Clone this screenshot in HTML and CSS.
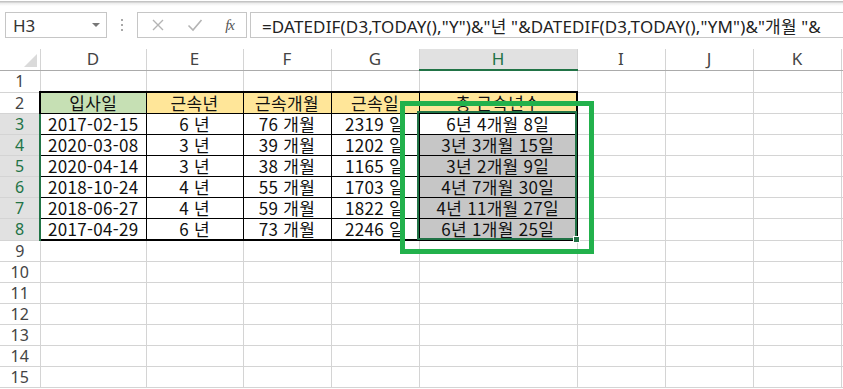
FILE: index.html
```html
<!DOCTYPE html>
<html lang="ko">
<head>
  <meta charset="UTF-8">
  <title>근속년수</title>
  <link rel="stylesheet" href="styles.css">
</head>
<body>
  <div class="topline"></div>

  <div class="fbar">
    <div class="namebox">
      <span>H3</span>
      <span class="arrow"></span>
    </div>
    <div class="dots"><i></i><i></i><i></i></div>
    <div class="btns">
      <svg class="ico" width="14" height="14" viewBox="0 0 14 14"><path d="M2 2 L12 12 M12 2 L2 12" stroke="#b4b4b4" stroke-width="1.4" fill="none"/></svg>
      <svg class="ico" width="16" height="14" viewBox="0 0 16 14"><path d="M1.5 7.5 L6 12 L14.5 2" stroke="#b4b4b4" stroke-width="1.6" fill="none"/></svg>
      <span class="fx">fx</span>
    </div>
    <div class="formula">=DATEDIF(D3,TODAY(),"Y")&amp;"년 "&amp;DATEDIF(D3,TODAY(),"YM")&amp;"개월 "&amp;</div>
  </div>

  <div class="sheet-wrap">
    <table class="sheet">
      <colgroup>
        <col class="w-hd"><col class="w-d"><col class="w-e"><col class="w-n"><col class="w-n">
        <col class="w-h"><col class="w-n"><col class="w-n"><col class="w-n"><col class="w-n">
      </colgroup>
      <tr class="colhead">
        <th class="corner"><span class="tri"></span></th>
        <th>D</th><th>E</th><th>F</th><th>G</th><th class="on">H</th><th>I</th><th>J</th><th>K</th><th></th>
      </tr>
      <tr><th>1</th><td></td><td></td><td></td><td></td><td></td><td></td><td></td><td></td><td></td></tr>
      <tr class="first">
        <th>2</th>
        <td class="d l hgreen">입사일</td><td class="d hyel">근속년</td><td class="d hyel">근속개월</td><td class="d hyel">근속일</td><td class="d r hyel">총 근속년수</td>
        <td></td><td></td><td></td><td></td>
      </tr>
      <tr>
        <th class="on">3</th>
        <td class="d l">2017-02-15</td><td class="d">6 년</td><td class="d">76 개월</td><td class="d">2319 일</td><td class="d r">6년 4개월 8일</td>
        <td></td><td></td><td></td><td></td>
      </tr>
      <tr>
        <th class="on">4</th>
        <td class="d l">2020-03-08</td><td class="d">3 년</td><td class="d">39 개월</td><td class="d">1202 일</td><td class="d r sel">3년 3개월 15일</td>
        <td></td><td></td><td></td><td></td>
      </tr>
      <tr>
        <th class="on">5</th>
        <td class="d l">2020-04-14</td><td class="d">3 년</td><td class="d">38 개월</td><td class="d">1165 일</td><td class="d r sel">3년 2개월 9일</td>
        <td></td><td></td><td></td><td></td>
      </tr>
      <tr>
        <th class="on">6</th>
        <td class="d l">2018-10-24</td><td class="d">4 년</td><td class="d">55 개월</td><td class="d">1703 일</td><td class="d r sel">4년 7개월 30일</td>
        <td></td><td></td><td></td><td></td>
      </tr>
      <tr>
        <th class="on">7</th>
        <td class="d l">2018-06-27</td><td class="d">4 년</td><td class="d">59 개월</td><td class="d">1822 일</td><td class="d r sel">4년 11개월 27일</td>
        <td></td><td></td><td></td><td></td>
      </tr>
      <tr class="last">
        <th class="on">8</th>
        <td class="d l">2017-04-29</td><td class="d">6 년</td><td class="d">73 개월</td><td class="d">2246 일</td><td class="d r sel">6년 1개월 25일</td>
        <td></td><td></td><td></td><td></td>
      </tr>
      <tr><th>9</th><td></td><td></td><td></td><td></td><td></td><td></td><td></td><td></td><td></td></tr>
      <tr><th>10</th><td></td><td></td><td></td><td></td><td></td><td></td><td></td><td></td><td></td></tr>
      <tr><th>11</th><td></td><td></td><td></td><td></td><td></td><td></td><td></td><td></td><td></td></tr>
      <tr><th>12</th><td></td><td></td><td></td><td></td><td></td><td></td><td></td><td></td><td></td></tr>
      <tr><th>13</th><td></td><td></td><td></td><td></td><td></td><td></td><td></td><td></td><td></td></tr>
      <tr><th>14</th><td></td><td></td><td></td><td></td><td></td><td></td><td></td><td></td><td></td></tr>
      <tr><th>15</th><td></td><td></td><td></td><td></td><td></td><td></td><td></td><td></td><td></td></tr>
    </table>

    <div class="selection"><span class="handle"></span></div>
    <div class="highlight"></div>
  </div>
</body>
</html>
```

FILE: styles.css
```css
body {
  margin: 0;
  width: 843px;
  height: 389px;
  overflow: hidden;
  background: #fff;
  font-family: "Noto Sans", "Noto Sans CJK KR", sans-serif;
  color: #222;
}
.topline {
  height: 6px;
  background: linear-gradient(to bottom, #fff 0, #fff 1px, #c4c4c4 1px, #c4c4c4 2px, #ececec 3px, #fff 6px);
}
.fbar {
  display: flex;
  align-items: center;
  height: 26px;
  margin-top: 6px;
  margin-bottom: 11px;
  padding-left: 5px;
}
.namebox, .btns, .formula {
  box-sizing: border-box;
  height: 26px;
  border: 1px solid #c6c6c6;
  display: flex;
  align-items: center;
}
.namebox {
  width: 102px;
  padding: 0 6px 0 7px;
  justify-content: space-between;
  font-size: 17px;
  color: #333;
}
.arrow {
  width: 0;
  height: 0;
  border-left: 4px solid transparent;
  border-right: 4px solid transparent;
  border-top: 4px solid #777;
}
.dots {
  display: flex;
  flex-direction: column;
  gap: 3px;
  margin: 0 14px 0 14px;
}
.dots i {
  display: block;
  width: 2px;
  height: 2px;
  background: #a8a8a8;
}
.btns {
  width: 110px;
  padding: 0 12px 0 13px;
  justify-content: space-between;
}
.fx {
  font-family: "Liberation Serif", serif;
  font-style: italic;
  font-size: 15px;
  color: #555;
  letter-spacing: -1px;
}
.formula {
  flex: 1;
  margin-left: 3px;
  border-right: none;
  padding-left: 11px;
  font-size: 17px;
  letter-spacing: 0.15px;
  color: #222;
  white-space: nowrap;
  overflow: hidden;
}

.sheet-wrap {
  position: relative;
}
.sheet {
  border-collapse: collapse;
  table-layout: fixed;
  width: 881px;
}
.w-hd { width: 40px; }
.w-d { width: 106px; }
.w-e { width: 97px; }
.w-n { width: 88px; }
.w-h { width: 158px; }

.sheet th, .sheet td {
  height: 20px;
  padding: 0;
  line-height: 20px;
  border: 1px solid #d4d4d4;
  text-align: center;
  vertical-align: middle;
  white-space: nowrap;
  overflow: hidden;
}
.sheet tr:first-child th { border-top: none; }
.sheet th:first-child { border-left: none; }

.sheet th {
  font-family: "Noto Sans", sans-serif;
  font-weight: normal;
  font-size: 16px;
  color: #444;
}
.colhead th {
  border-bottom-color: #ababab;
  font-size: 17px;
}
.colhead th.on {
  background: #e1e1e1;
  color: #217346;
  border-bottom: 2px solid #217346;
}
.sheet th.on {
  background: #e1e1e1;
  color: #217346;
}
.sheet tr th.on:first-child { border-right: 2px solid #217346; }
.corner { position: relative; }
.tri {
  position: absolute;
  right: 3px;
  bottom: 3px;
  width: 0;
  height: 0;
  border-left: 13px solid transparent;
  border-bottom: 13px solid #dadada;
}

.sheet td {
  font-family: "Noto Sans CJK KR", sans-serif;
  font-size: 17px;
  letter-spacing: 0.3px;
  color: #111;
}
.sheet td.d { border: 1px solid #000; }
.sheet td.l { border-left: 2px solid #000; }
.sheet td.r { border-right: 2px solid #000; }
.first td.d { border-top: 2px solid #000; }
.last td.d { border-bottom: 2px solid #000; }
.hgreen { background: #c6e0b4; }
.hyel { background: #ffe699; }
.sheet td.sel { background: #c6c6c6; }

.selection {
  position: absolute;
  left: 417px;
  top: 62px;
  width: 156px;
  height: 125px;
  border: 2px solid #217346;
}
.handle {
  position: absolute;
  right: -5px;
  bottom: -5px;
  width: 5px;
  height: 5px;
  background: #217346;
  border: 1px solid #fff;
}
.highlight {
  position: absolute;
  left: 400px;
  top: 52px;
  width: 184px;
  height: 143px;
  border: 5px solid #22b14c;
}
```
